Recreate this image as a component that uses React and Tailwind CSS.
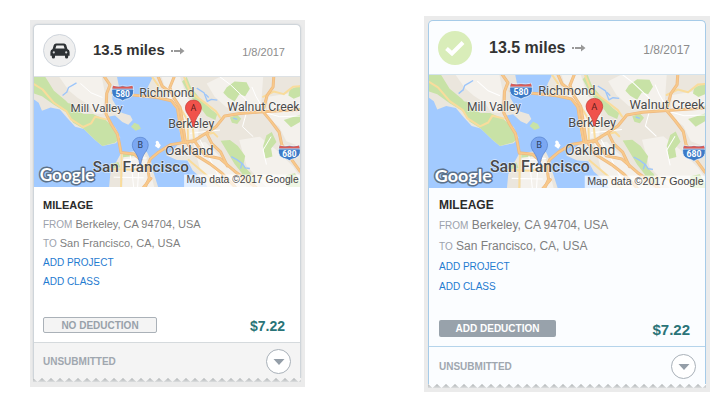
import { useId } from "react";
import clsx from "clsx";

const expense = {
  distance: "13.5 miles",
  date: "1/8/2017",
  type: "MILEAGE",
  from: "Berkeley, CA 94704, USA",
  to: "San Francisco, CA, USA",
  amount: "$7.22",
  status: "UNSUBMITTED",
};

const highways = [
  "M212 0 L229 24 L219 50 L217 112 L234 145 L251 172 L257 200 L262 228 L300 232 L322 250",
  "M236 48 L300 55 L370 62 L414 72 L432 95 L439 140 L450 198",
  "M422 0 L409 32 L418 58 L440 92 L448 140 L456 196",
  "M335 332 L347 305 L342 268 L350 248 L376 226 L412 204 L460 196 L482 192",
  "M476 196 L520 168 L548 150 L574 118 L620 110 L690 105 L801 98",
  "M722 0 L720 30 L702 56 L689 104 L714 134 L738 166 L746 204 L772 244 L801 284",
  "M460 196 L482 232 L530 262 L566 290 L606 332",
  "M484 194 L514 236 L560 246 L604 284 L668 332",
  "M520 170 L536 202 L562 226 L582 268",
  "M374 0 L386 28 L408 44",
  "M352 306 L330 332",
];

const mainRoads = [
  "M0 22 L26 38 L60 78 L98 104 L112 128 L148 151 L172 140 L184 120 L217 128",
  "M452 0 L470 46 L512 76 L548 104 L560 122",
  "M440 92 L462 130 L464 192",
  "M482 192 L478 150 L486 120",
  "M264 230 L262 332",
  "M228 278 L300 280 L344 262",
  "M466 250 L520 296 L560 332",
  "M690 60 L722 44 L752 52 L780 30 L801 28",
  "M500 178 L540 168 L552 180",
  "M618 310 L660 298 L700 306",
  "M356 0 L374 26 L364 54",
];

const streets = [
  "M290 236 L300 332",
  "M318 236 L312 332",
  "M268 250 L340 244",
  "M240 302 L330 304",
  "M500 190 L560 306",
  "M470 170 L560 160",
  "M560 0 L592 24 L640 70",
  "M640 106 L628 150 L660 180",
  "M656 30 L668 58 L690 96",
  "M690 106 L740 120 L801 118",
  "M140 20 L172 48 L206 62",
  "M714 180 L690 220 L700 264",
];

function Shield({ x, y, route }) {
  return (
    <g transform={`translate(${x} ${y})`}>
      <path
        d="M-30 -22 Q-15 -17 0 -21 Q15 -17 30 -22 L33 -7 Q34 11 18 17 Q7 19 0 24 Q-7 19 -18 17 Q-34 11 -33 -7 Z"
        fill="#3c7bc8"
        stroke="#fff"
        strokeWidth="2"
      />
      <path
        d="M-29 -21 Q-15 -16 0 -20 Q15 -16 29 -21 L31 -12 L-31 -12 Z"
        fill="#dd5c55"
      />
      <path d="M-32 -11 H32" stroke="#fff" strokeWidth="2" />
      <text
        x="0"
        y="12"
        textAnchor="middle"
        fontSize="25"
        className="fill-white font-['Roboto',sans-serif] font-bold"
      >
        {route}
      </text>
    </g>
  );
}

function Pin({ x, y, letter, fill, edge }) {
  return (
    <g transform={`translate(${x} ${y})`}>
      <path
        d="M0 -80 C-14 -80 -24 -70 -24 -56 C-24 -42 -12 -34 -7 -20 Q-3 -10 -2 0 L2 0 Q3 -10 7 -20 C12 -34 24 -42 24 -56 C24 -70 14 -80 0 -80 Z"
        fill={fill}
        stroke={edge}
        strokeWidth="2"
      />
      <text
        x="0"
        y="-47"
        textAnchor="middle"
        fontSize="27"
        fill="#000"
        fillOpacity="0.65"
        className="font-['Roboto',sans-serif]"
      >
        {letter}
      </text>
    </g>
  );
}

function RouteMap({ className }) {
  return (
    <svg
      viewBox="0 0 801 332"
      preserveAspectRatio="xMidYMid slice"
      role="img"
      aria-label="Route from Berkeley to San Francisco"
      className={clsx("block w-full", className)}
    >
      <rect width="801" height="332" fill="#a2caff" />

      {/* land */}
      <g fill="#ebe6dd">
        <path d="M0 0 H250 L256 30 L236 42 L236 68 L250 92 L264 108 L290 116 L297 130 L284 144 L266 136 L244 116 L222 120 L228 136 L246 154 L260 184 L246 200 L206 208 L184 190 L150 157 L124 150 L100 124 L78 98 L50 92 L24 102 L14 78 L0 68 Z" />
        <path d="M358 0 L344 28 L342 62 L370 58 L412 76 L430 98 L434 138 L444 194 L424 214 L398 236 L430 250 L462 252 L478 282 L512 312 L522 332 H801 V0 Z" />
        <path d="M262 230 L316 222 L340 226 L352 252 L358 282 L374 332 H226 L230 290 L244 262 Z" />
        <path d="M372 194 L382 206 L376 216 L364 208 Z M366 196 Q372 188 377 198 L372 216 Z" fill="#fff" />
      </g>

      {/* built up areas */}
      <g fill="#f4f1ec">
        <path d="M76 0 H204 L214 50 L206 112 L180 110 L164 84 L130 62 L104 40 Z" />
        <path d="M384 0 H440 L460 60 L500 110 L494 180 L456 190 L440 110 L404 62 Z" />
        <path d="M520 20 L560 0 H690 L684 84 L640 104 L580 92 L544 60 Z" />
        <path d="M706 60 L801 44 V210 L760 194 L738 150 L700 120 Z" />
        <path d="M480 200 L516 196 L590 270 L640 332 H560 L500 280 Z" />
        <path d="M270 240 L334 234 L352 290 L362 332 H266 Z" />
        <path d="M618 190 L680 180 L730 220 L780 270 L801 300 V332 H700 L640 268 Z" />
      </g>

      {/* parks */}
      <g fill="#c8e2a6">
        <path d="M0 0 H34 L60 42 L96 72 L118 96 L150 112 L178 112 L216 130 L240 152 L258 186 L244 198 L206 208 L184 190 L150 157 L118 138 L96 106 L60 84 L24 58 L0 50 Z" />
        <path d="M80 78 L112 80 L124 104 L100 104 Z" />
        <path d="M292 150 L302 138 L316 144 L322 156 L306 162 Z" />
        <path d="M460 0 L472 30 L500 66 L536 100 L552 112 L546 130 L520 118 L496 86 L468 56 L446 14 Z" />
        <path d="M580 32 L604 14 L640 16 L650 36 L636 58 L618 52 L604 74 L584 62 L570 48 Z" />
        <path d="M590 122 L612 114 L624 126 L612 142 L596 138 Z" />
        <path d="M562 192 L590 190 L614 208 L636 238 L630 266 L648 286 L632 298 L604 262 L586 232 Z" />
        <path d="M700 176 L716 166 L730 196 L714 216 L718 240 L696 246 L690 208 Z" />
        <path d="M770 38 L801 26 V58 L782 66 L766 56 Z" />
        <path d="M752 130 L801 114 V136 L774 152 Z" />
        <path d="M624 292 L650 286 L666 318 L640 322 Z" />
        <path d="M230 262 L254 256 L260 272 L234 276 Z" />
        <path d="M268 232 L300 228 L302 238 L268 242 Z" />
        <path d="M758 296 L786 290 L801 316 V332 H764 Z" />
      </g>

      {/* lakes */}
      <g fill="none" stroke="#9cc5fa" strokeWidth="4" strokeLinejoin="round">
        <path d="M98 48 L104 32 L118 24 L128 18 M86 56 L98 46" />
        <path d="M490 34 L512 48 L522 74 L534 68 L552 70" />
        <path d="M516 52 L526 62" />
        <path d="M600 124 L612 128" />
        <path d="M594 240 L612 250 L628 262 L636 274 L650 276 M626 262 L622 276" />
      </g>

      <g fill="none" stroke="#fff" strokeWidth="3">
        {streets.map((d) => (
          <path key={d} d={d} />
        ))}
      </g>
      <g fill="none" strokeLinejoin="round" strokeLinecap="round">
        {mainRoads.map((d) => (
          <path key={d} d={d} stroke="#f9dc9c" strokeWidth="6" />
        ))}
        {highways.map((d) => (
          <path key={d} d={d} stroke="#edb982" strokeWidth="9" />
        ))}
        {highways.map((d) => (
          <path key={d} d={d} stroke="#f8c98a" strokeWidth="5" />
        ))}
      </g>

      <Shield x={267} y={48} route="580" />
      <Shield x={769} y={228} route="680" />

      {/* place names */}
      <g
        fill="#4a4a4a"
        stroke="#fff"
        strokeOpacity="0.6"
        strokeWidth="4"
        paintOrder="stroke"
        className="font-['Roboto',sans-serif]"
      >
        <text x="110" y="107" fontSize="35">
          Mill Valley
        </text>
        <text x="317" y="60" fontSize="37">
          Richmond
        </text>
        <text x="404" y="154" fontSize="37">
          Berkeley
        </text>
        <text x="582" y="102" fontSize="37">
          Walnut Creek
        </text>
        <text x="395" y="235" fontSize="40">
          Oakland
        </text>
        <text x="177" y="285" fontSize="46" className="font-medium">
          San Francisco
        </text>
      </g>

      <Pin x={480} y={150} letter="A" fill="#f0524b" edge="#c03a35" />
      <Pin x={320} y={262} letter="B" fill="#7ba7f2" edge="#5580cc" />

      <text
        x="17"
        y="314"
        fontSize="52"
        fill="#fff"
        stroke="#5c7189"
        strokeWidth="9"
        strokeLinejoin="round"
        paintOrder="stroke"
        className="font-['Lato',sans-serif] font-bold"
      >
        Google
      </text>
      <rect x="452" y="294" width="349" height="38" fill="#fff" fillOpacity="0.7" />
      <text
        x="459"
        y="321"
        fontSize="31"
        fill="#444"
        className="font-['Liberation_Sans',sans-serif]"
      >
        Map data ©2017 Google
      </text>
    </svg>
  );
}

function CarIcon() {
  return (
    <svg viewBox="0 0 20 16" className="h-4 w-5" aria-hidden="true">
      <path
        fill="#2e3235"
        fillRule="evenodd"
        d="M6 0.5 H14 Q15.7 0.5 16.2 2 L17.4 6 Q19.6 6.8 19.6 9 V12.8 H18.2 V14 Q18.2 15.6 16.6 15.6 Q15 15.6 15 14 V12.8 H5 V14 Q5 15.6 3.4 15.6 Q1.8 15.6 1.8 14 V12.8 H0.4 V9 Q0.4 6.8 2.6 6 L3.8 2 Q4.3 0.5 6 0.5 Z M6.4 2.4 L5.4 5.4 H14.6 L13.6 2.4 Z"
      />
      <circle cx="3.8" cy="9.4" r="1.1" fill="#d5d6d7" />
      <circle cx="16.2" cy="9.4" r="1.1" fill="#d5d6d7" />
    </svg>
  );
}

function CheckIcon() {
  return (
    <svg viewBox="0 0 20 16" className="h-4 w-5" aria-hidden="true">
      <path d="M1.5 8.5 L7 13.5 L18 2.5" fill="none" stroke="#fff" strokeWidth="4" />
    </svg>
  );
}

function ArrowIcon() {
  return (
    <svg viewBox="0 0 14 8" className="h-2 w-3.5" aria-hidden="true">
      <path d="M0 3 H2 V5 H0 Z M3 3 H9 V0.5 L13.5 4 L9 7.5 V5 H3 Z" fill="#999" />
    </svg>
  );
}

function TornEdge({ fill }) {
  const id = useId();
  return (
    <svg className="block h-1 w-full" aria-hidden="true">
      <defs>
        <linearGradient id={`${id}-shade`} x1="0" y1="0" x2="0" y2="1">
          <stop offset="0" stopColor="#adb1b3" />
          <stop offset="1" stopColor="#dcdedf" />
        </linearGradient>
        <pattern id={id} width="9" height="4" patternUnits="userSpaceOnUse">
          <path d="M0 0 H9 L4.5 4 Z" fill={fill} />
        </pattern>
      </defs>
      <rect width="100%" height="4" fill={`url(#${id}-shade)`} />
      <rect width="100%" height="4" fill={`url(#${id})`} />
    </svg>
  );
}

const idle = {
  panel: "mt-1 pt-1 pr-1 pb-[5px] pl-[3px]",
  card: "border-[#cfd5da] bg-white shadow-[0_0_2px_#cdd2d6]",
  header: "h-[52px] border-[#dde1e4]",
  badge: "size-[33px] border border-[#cfd5dc] bg-[#efefef]",
  miles: "text-[15px]",
  small: "text-[11px]",
  map: "h-[110px]",
  lines: "leading-[19px]",
  action: "h-4 w-[114px] border border-[#aab1b8] bg-[#f4f4f4] text-[#98a1aa]",
  amount: "text-[14px]",
  body: "h-[155px] pt-[9px] pl-[9px]",
  footer: "h-9 border-[#d5dadd] bg-[#f4f4f4] pl-[9px]",
};

const selected = {
  panel: "p-1",
  card: "border-[#a6cbe8] bg-[#fbfdff]",
  header: "h-[54px] border-[#d3e3ee]",
  badge: "size-[34px] bg-[#d9edb9]",
  miles: "text-[16px]",
  small: "text-[12px]",
  map: "h-[113px]",
  lines: "leading-5",
  action: "h-[17px] w-[117px] bg-[#98a2ab] text-white",
  amount: "text-[15px]",
  body: "h-[158px] pt-[7px] pl-2.5",
  footer: "h-[38px] border-[#b5d4eb] bg-[#fbfdff] pl-2.5",
};

function ExpenseCard({ isSelected, action }) {
  const look = isSelected ? selected : idle;

  return (
    <div className={clsx("bg-[#ebebeb]", look.panel)}>
      <article>
        <div className={clsx("overflow-hidden rounded-t-[5px] border border-b-0", look.card)}>
          <header className={clsx("flex items-center border-b pr-[15px] pl-[9px]", look.header)}>
            <span
              className={clsx("flex shrink-0 items-center justify-center rounded-full", look.badge)}
            >
              {isSelected ? <CheckIcon /> : <CarIcon />}
            </span>
            <h2 className={clsx("ml-[17px] font-bold whitespace-nowrap text-[#333]", look.miles)}>
              {expense.distance}
            </h2>
            <span className="ml-1.5">
              <ArrowIcon />
            </span>
            <time className={clsx("mt-1 ml-auto text-[#8c8c8c]", look.small)}>{expense.date}</time>
          </header>

          <RouteMap className={look.map} />

          <div className={clsx("flex flex-col pr-[15px] pb-[9px]", look.body)}>
            <div className={clsx("flex flex-col items-start text-[#7f7f7f]", look.lines)}>
              <h3 className={clsx("font-bold text-[#2b2b2b]", look.small, look.lines)}>
                {expense.type}
              </h3>
              <p className={clsx(look.small, look.lines)}>
                <span className="text-[10px] text-[#9ca2ac]">FROM</span> {expense.from}
              </p>
              <p className={clsx(look.small, look.lines)}>
                <span className="text-[10px] text-[#9ca2ac]">TO</span> {expense.to}
              </p>
              <a href="#project" className={clsx("text-[10px] text-[#1f7bd0]", look.lines)}>
                ADD PROJECT
              </a>
              <a href="#class" className={clsx("text-[10px] text-[#1f7bd0]", look.lines)}>
                ADD CLASS
              </a>
            </div>
            <div className="mt-auto flex items-end justify-between">
              <button
                type="button"
                className={clsx(
                  "flex items-center justify-center rounded-[2px] text-[10px] font-bold",
                  look.action
                )}
              >
                {action}
              </button>
              <strong className={clsx("leading-[14px] text-[#2a7478]", look.amount)}>
                {expense.amount}
              </strong>
            </div>
          </div>

          <footer
            className={clsx("flex items-center justify-between border-t pt-0.5 pr-[9px]", look.footer)}
          >
            <span className="text-[10px] font-bold text-[#a0a7af]">{expense.status}</span>
            <button
              type="button"
              aria-label="More actions"
              className="flex size-[25px] items-center justify-center rounded-full border border-[#a9b1b9] bg-white"
            >
              <svg viewBox="0 0 12 6" className="h-1.5 w-3" aria-hidden="true">
                <path d="M0.5 0 H11.5 L6 6 Z" fill="#949ea8" />
              </svg>
            </button>
          </footer>
        </div>
        <TornEdge fill={isSelected ? "#fbfdff" : "#f4f4f4"} />
      </article>
    </div>
  );
}

export default function App() {
  return (
    <main className="grid min-h-screen grid-cols-[275fr_286fr] content-start items-start gap-[119px] bg-white pt-4 pr-[3px] pl-[30px] font-['Liberation_Sans',Arial,sans-serif]">
      <ExpenseCard action="NO DEDUCTION" />
      <ExpenseCard isSelected action="ADD DEDUCTION" />
    </main>
  );
}
